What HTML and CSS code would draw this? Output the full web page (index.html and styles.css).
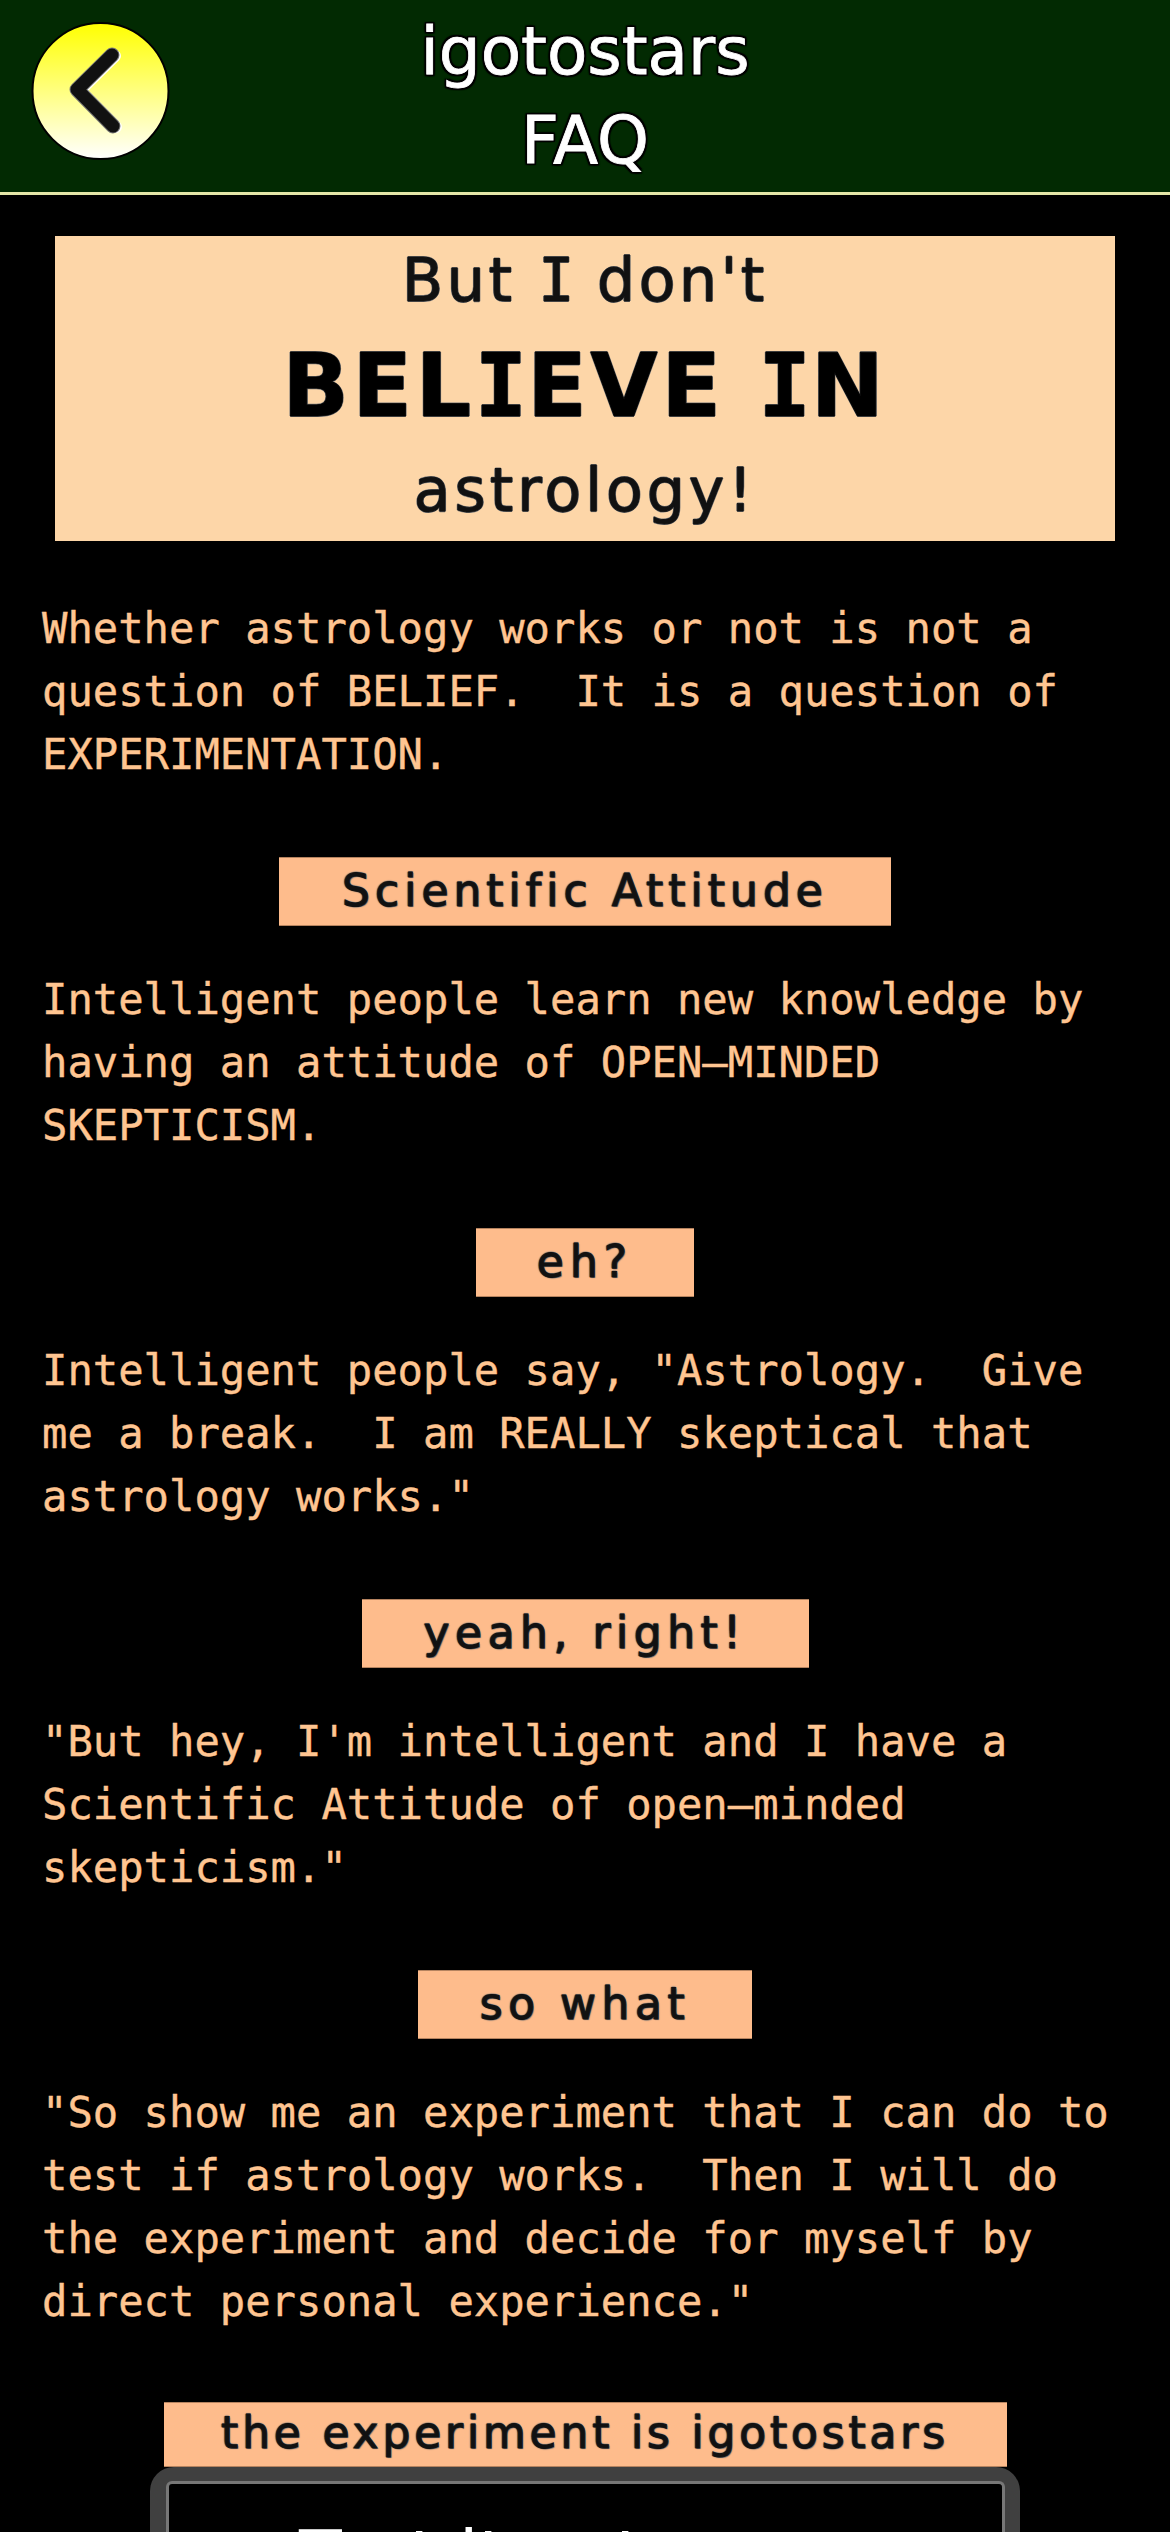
FILE: index.html
```html
<!DOCTYPE html>
<html lang="en">
<head>
    <meta charset="UTF-8">
    <title>igotostars FAQ</title>
    <link rel="stylesheet" href="styles.css">
</head>
<body>
    <header class="topbar">
        <a class="back" href="#">
            <svg viewBox="0 0 140 140" width="140" height="140">
                <defs>
                    <linearGradient id="backFill" x1="0" y1="0" x2="0" y2="1">
                        <stop offset="0" stop-color="#ffff00"/>
                        <stop offset="1" stop-color="#ffffff"/>
                    </linearGradient>
                </defs>
                <circle cx="69.5" cy="70" r="68" fill="url(#backFill)" stroke="#000" stroke-width="2"/>
                <path d="M81 34 L46 68.5 L82 105" fill="none" stroke="#fff" stroke-width="12" stroke-linecap="round" stroke-linejoin="round" transform="translate(3 1)"/>
                <path d="M81 34 L46 68.5 L82 105" fill="none" stroke="#777" stroke-width="15" stroke-linecap="round" stroke-linejoin="round"/>
                <path d="M81 34 L46 68.5 L82 105" fill="none" stroke="#111" stroke-width="13" stroke-linecap="round" stroke-linejoin="round"/>
            </svg>
        </a>
        <h1 class="title">igotostars<br>FAQ</h1>
    </header>

    <main class="content">
        <div class="banner">
            <p class="banner-small banner-top">But <span class="slab">I</span> don't</p>
            <p class="banner-big">BEL<span class="slab">I</span>EVE <span class="slab">I</span>N</p>
            <p class="banner-small banner-end">astrology!</p>
        </div>

        <p class="para">Whether astrology works or not is not a question of BELIEF.&nbsp; It is a question of EXPERIMENTATION.</p>
        <h2 class="label label-sci">Scientific Attitude</h2>

        <p class="para">Intelligent people learn new knowledge by having an attitude of OPEN–MINDED SKEPTICISM.</p>
        <h2 class="label label-eh">eh?</h2>

        <p class="para">Intelligent people say, "Astrology.&nbsp; Give me a break.&nbsp; I am REALLY skeptical that astrology works."</p>
        <h2 class="label label-yeah">yeah, right!</h2>

        <p class="para">"But hey, I'm intelligent and I have a Scientific Attitude of open–minded skepticism."</p>
        <h2 class="label label-sowhat">so what</h2>

        <p class="para">"So show me an experiment that I can do to test if astrology works.&nbsp; Then I will do the experiment and decide for myself by direct personal experience."</p>
        <h2 class="label label-exp">the experiment is igotostars</h2>

        <div class="device">
            <div class="screen">
                <p class="screen-text">Test it out</p>
            </div>
        </div>
    </main>
</body>
</html>
```

FILE: styles.css
```css
html, body {
    margin: 0;
    padding: 0;
    background: #000;
    height: 2532px;
    overflow: hidden;
}

body {
    font-family: "DejaVu Sans", sans-serif;
}

.topbar {
    position: relative;
    height: 192px;
    background: #022a02;
    border-bottom: 3px solid #e4e6a8;
}

.back {
    position: absolute;
    left: 31px;
    top: 21px;
    display: block;
    width: 140px;
    height: 140px;
}

.title {
    margin: 0;
    padding-top: 7px;
    text-align: center;
    color: #fff;
    font-size: 66px;
    font-weight: normal;
    line-height: 89px;
    -webkit-text-stroke: 0.8px #fff;
    text-shadow: 2px 0 1px #000, -2px 0 1px #000, 0 2px 1px #000, 0 -2px 1px #000, 2px 2px 1px #000, -2px -2px 1px #000, 2px -2px 1px #000, -2px 2px 1px #000;
}

.content {
    padding: 41px 42px 0;
}

.banner {
    margin: 0 13px 56px;
    height: 305px;
    background: #fdd6a8;
    color: #111;
    text-align: center;
    text-shadow: 1px 0 0 #777, -1px 0 0 #777, 0 1px 0 #777, 0 -1px 0 #777;
}

.banner p {
    margin: 0;
}

.banner-small {
    font-size: 60px;
    line-height: 88px;
    -webkit-text-stroke: 0.8px #111;
}

.banner-top {
    letter-spacing: 3.6px;
}

.banner-end {
    letter-spacing: 4px;
    line-height: 84px;
}

.banner-big {
    font-size: 87px;
    font-weight: bold;
    letter-spacing: 3.7px;
    line-height: 124px;
    color: #000;
    -webkit-text-stroke: 0.8px #000;
}

/* DejaVu Sans has a bare capital I, the mono one has the bars */
.slab {
    font-family: "DejaVu Sans Mono", monospace;
    letter-spacing: 0;
}

.para {
    margin: 0;
    color: #ffc591;
    font-family: "DejaVu Sans Mono", monospace;
    font-size: 42.2px;
    line-height: 63px;
    -webkit-text-stroke: 0.4px #ffc591;
}

.label {
    margin: 71px auto 42px;
    height: 69px;
    background: #febc8c;
    color: #111;
    font-size: 44px;
    font-weight: normal;
    line-height: 66px;
    text-align: center;
    -webkit-text-stroke: 1px #111;
    text-shadow: 1px 1px 1px #666, -1px 0 1px #777, 0 -1px 1px #777;
    box-sizing: border-box;
    border-top: 1px solid #b5835f;
    border-bottom: 1px solid #b5835f;
}

.label-sci { width: 612px; letter-spacing: 5px; }
.label-eh { width: 218px; letter-spacing: 6px; }
.label-yeah { width: 447px; letter-spacing: 5.5px; }
.label-sowhat { width: 334px; letter-spacing: 5.5px; }

.label-exp {
    width: 843px;
    height: 65px;
    margin: 69px auto 0;
    line-height: 60px;
    letter-spacing: 3.8px;
}

.device {
    margin: 0 auto;
    width: 870px;
    height: 66px;
    box-sizing: border-box;
    padding: 14px 15px 0 16px;
    background: #404040;
    border-radius: 24px 24px 0 0;
    overflow: hidden;
}

.screen {
    height: 60px;
    overflow: hidden;
    background: #000;
    border-top: 3px solid #777;
    border-left: 3px solid #777;
    border-right: 3px solid #777;
    border-radius: 6px 6px 0 0;
}

.screen-text {
    margin: 31px 0 0;
    padding-left: 130px;
    color: #fff;
    font-size: 70px;
    line-height: normal;
}
```
